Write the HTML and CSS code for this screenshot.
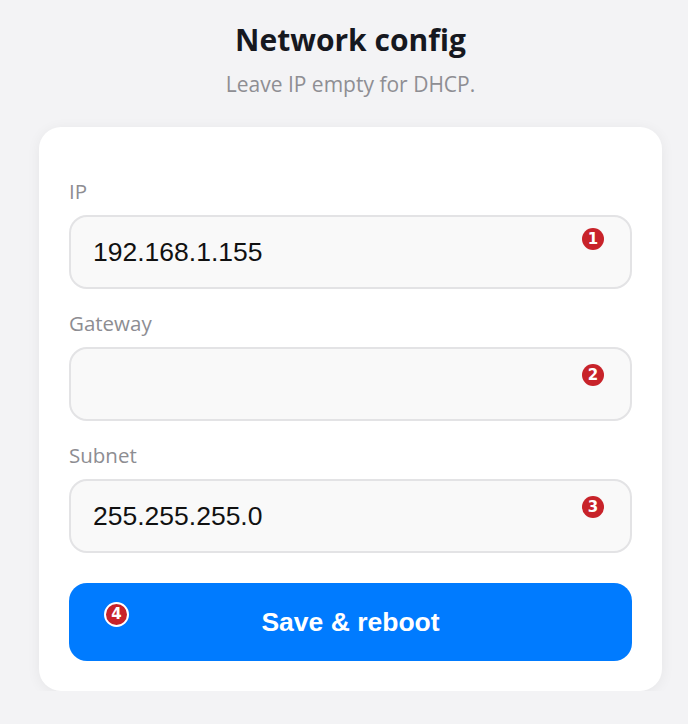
FILE: index.html
```html
<!DOCTYPE html>
<html lang="en">
<head>
<meta charset="utf-8">
<title>Network config</title>
<link rel="stylesheet" href="styles.css">
</head>
<body>
<div class="page">
  <h1 class="title">Network config</h1>
  <p class="subtitle">Leave IP empty for DHCP.</p>
  <form class="card">
    <div class="field">
      <label class="label" for="ip">IP</label>
      <div class="control">
        <input class="input" id="ip" type="text" value="192.168.1.155">
        <span class="badge badge-1">1</span>
      </div>
    </div>
    <div class="field">
      <label class="label" for="gw">Gateway</label>
      <div class="control">
        <input class="input" id="gw" type="text" value="">
        <span class="badge badge-2">2</span>
      </div>
    </div>
    <div class="field">
      <label class="label" for="sn">Subnet</label>
      <div class="control">
        <input class="input" id="sn" type="text" value="255.255.255.0">
        <span class="badge badge-3">3</span>
      </div>
    </div>
    <div class="control button-wrap">
      <button class="button" type="button">Save &amp; reboot</button>
      <span class="badge badge-4">4</span>
    </div>
  </form>
</div>
</body>
</html>
```
FILE: styles.css
```css
html, body {
  margin: 0;
  padding: 0;
}
body {
  background: #f3f3f5;
  font-family: "Open Sans", "Noto Sans", sans-serif;
}
.page {
  width: 623px;
  margin-left: 39px;
  padding-top: 20px;
}
.title {
  margin: 0;
  text-align: center;
  font-size: 30px;
  line-height: 40px;
  font-weight: 700;
  color: #16181f;
}
.subtitle {
  margin: 10px 0 0;
  text-align: center;
  font-size: 21px;
  line-height: 28px;
  color: #8e8e93;
}
.card {
  margin-top: 29px;
  background: #ffffff;
  border-radius: 22px;
  box-shadow: 0 2px 14px rgba(0, 0, 0, 0.06);
  padding: 50px 30px 30px;
  display: flex;
  flex-direction: column;
  gap: 20px;
}
.field {
  display: flex;
  flex-direction: column;
  gap: 10px;
}
.label {
  font-size: 20.5px;
  line-height: 28px;
  color: #8d8d92;
}
.control {
  position: relative;
}
.input {
  box-sizing: border-box;
  display: block;
  width: 100%;
  height: 74px;
  margin: 0;
  padding: 0 22px;
  border: 2px solid #e3e3e5;
  border-radius: 18px;
  background: #f9f9f9;
  font-family: "Liberation Sans", Arial, sans-serif;
  font-size: 26.5px;
  color: #111111;
  outline: none;
}
.button-wrap {
  margin-top: 10px;
}
.button {
  display: block;
  width: 100%;
  height: 78px;
  margin: 0;
  border: none;
  border-radius: 18px;
  background: #007bff;
  color: #ffffff;
  font-family: "Liberation Sans", Arial, sans-serif;
  font-size: 26.5px;
  font-weight: 700;
}
.badge {
  position: absolute;
  box-sizing: border-box;
  width: 22px;
  height: 22px;
  border-radius: 50%;
  background: #c8232a;
  color: #ffffff;
  font-family: "DejaVu Sans", sans-serif;
  font-weight: 700;
  font-size: 15px;
  line-height: 22px;
  text-align: center;
}
.badge-1 { right: 28px; top: 13px; }
.badge-2 { right: 28px; top: 17px; }
.badge-3 { right: 28px; top: 17px; }
.badge-4 {
  left: 35px;
  top: 19px;
  width: 25px;
  height: 25px;
  font-size: 15px;
  line-height: 21px;
  border: 2px solid #ffffff;
}
```
